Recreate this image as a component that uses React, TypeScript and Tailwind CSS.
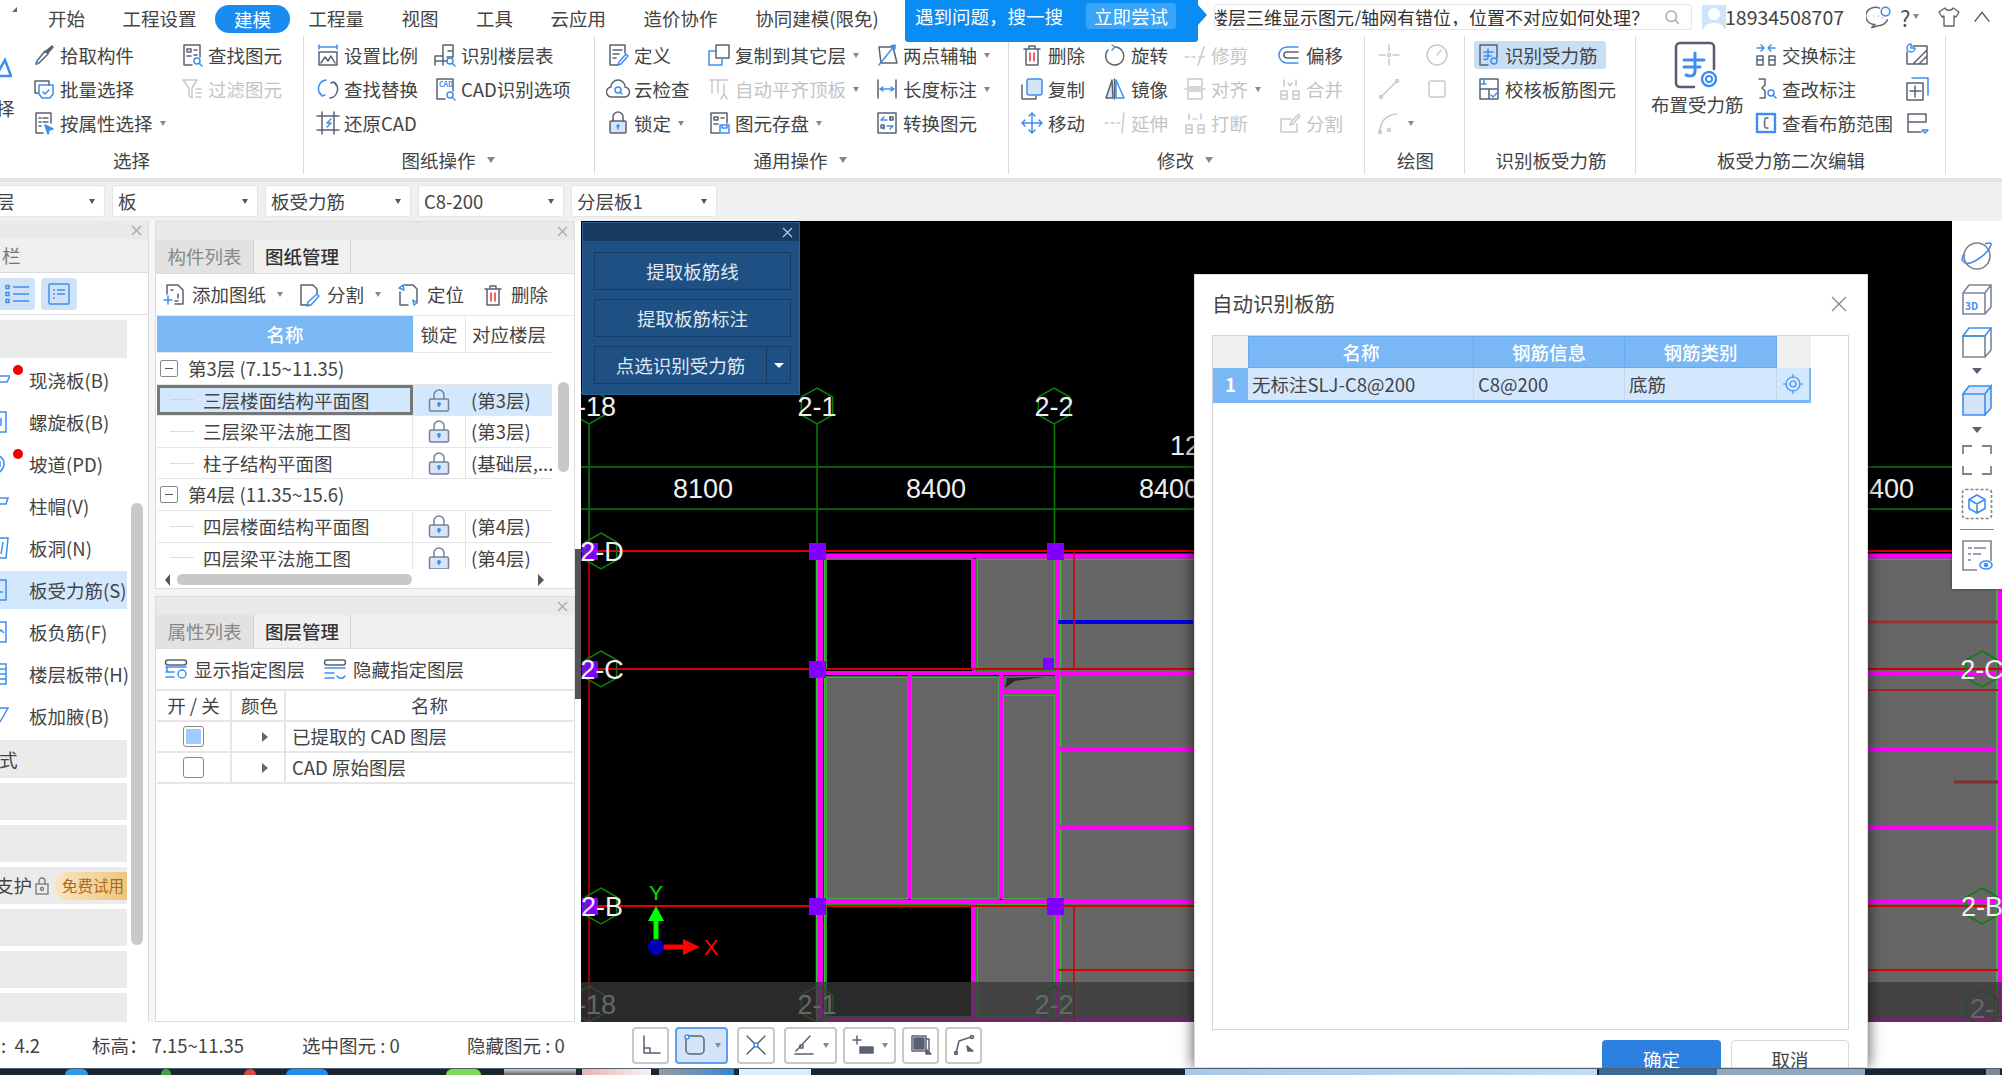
import React from 'react';

const BLUE = '#3d8ef0';

// every ribbon icon is a 24x24 drawing, currentColor is the grey (or the disabled grey)
const Ic = ({ children, size = 24 }: { children: React.ReactNode; size?: number }) => (
  <svg width={size} height={size} viewBox="0 0 24 24" fill="none" stroke="currentColor" strokeWidth="1.5" strokeLinecap="round" strokeLinejoin="round" className="shrink-0">
    {children}
  </svg>
);

const B = ({ d }: { d: string }) => <path d={d} stroke={BLUE} />;
const G = ({ d }: { d: string }) => <path d={d} />;

const icons: Record<string, React.ReactNode> = {
  pick: <><path d="M20 3l1 1-5 6-2-2z" fill="#5a6272" /><G d="M13 8l3 3-9 9-3 1 1-3z" /><B d="M5 18l-1 3 3-1" /></>,
  batch: <><G d="M3 4h14v4M3 4v12h3" /><B d="M7 8h14v9l-3 4H10l-3-4z" /><B d="M11 15l2 2 4-4" /></>,
  attr: <><G d="M4 2h15v10M4 2v20h7M7 7h2M11 7h5M7 11h2M11 11h5M7 15h2" /><path d="M13 14l8 4-4 1-1 4z" fill={BLUE} stroke={BLUE} /></>,
  find: <><G d="M4 2h16v12M4 2v20h8M7 6h4v3H7zM14 7h3M7 13h4M14 12h3" /><circle cx="17" cy="18" r="3" stroke={BLUE} /><B d="M19 20l3 3" /></>,
  filter: <><G d="M3 3h14l-5 8v10l-3-2v-8zM16 12h5M16 16h5M16 20h5" /></>,
  scale: <><B d="M3 2v4M21 2v4M4 4h16" /><G d="M3 9h18v13H3zM5 20l4-6 3 4 3-5 4 7" /></>,
  floors: <><G d="M2 22v-9h8v9M2 18h12M10 2h10v12h-6M10 2v11M15 8h5" /><circle cx="17" cy="18" r="3" stroke={BLUE} /><B d="M19 20l3 3" /></>,
  replace: <><B d="M10 3a9 9 0 00-4 16M4 16l2 3 3-1" /><G d="M14 21a9 9 0 004-16M20 8l-2-3-3 1" /></>,
  cadopt: <><G d="M4 2h16v12M4 2v20h8" /><text x="6" y="10" fontSize="7" fontWeight="700" fill={BLUE} stroke="none">CAD</text><circle cx="17" cy="18" r="3" stroke={BLUE} /><B d="M19 20l3 3" /></>,
  restore: <><G d="M6 1v22M18 1v22M1 5h22M1 19h22" /><B d="M15 8l-4 4h4l-4 4" /></>,
  define: <><G d="M4 2h15v8M4 2v20h8M7 7h9M7 11h6M7 15h3" /><B d="M20 11l2 2-7 8-3 1 1-3z" /></>,
  cloud: <><G d="M6 20a5 5 0 01-1-10 7 7 0 0114 0 5 5 0 01-1 10z" /><circle cx="12" cy="13" r="3" stroke={BLUE} /><B d="M14 15l2 2" /></>,
  lock: <><rect x="4" y="10" width="16" height="12" rx="1" fill="#d5e4f7" /><G d="M7 10V6a5 5 0 0110 0v4" /><circle cx="12" cy="15" r="1" fill={BLUE} stroke={BLUE} /><B d="M12 15v3" /></>,
  copylayer: <><G d="M9 2h13v13H9z" /><B d="M2 8h7M2 8v14h13v-6" /></>,
  auto: <><G d="M3 3h18M5 3v13M11 3v13M17 7v10M14 22l3-5 3 5" /></>,
  save: <><G d="M4 2h16v10M4 2v20h8M7 6h4v3H7zM14 7h3M7 13h4" /><B d="M13 14h9v8h-9zM15 14v3h5v-3" /></>,
  axis: <><G d="M4 4h14M6 20h16M4 4l2 16M18 4l4 16" /><B d="M4 22L20 2M20 2l-4 1M20 2v4" /></>,
  length: <><G d="M3 3v18M21 3v18" /><B d="M5 12h14M5 12l3-2M5 12l3 2M19 12l-3-2M19 12l-3 2" /></>,
  convert: <><G d="M3 2h18v20H3z" /><B d="M9 6L6 9h6M15 18l3-3h-6M15 6v3M9 18v-3" /><G d="M6 14h3v3H6zM15 6h3v3h-3z" /></>,
  del: <><G d="M4 6h16M9 6V3h6v3M6 6v16h12V6" /><path d="M10 10v8M14 10v8" stroke="#e33" /></>,
  rotate: <><G d="M12 4a9 9 0 11-7 3" /><B d="M9 2l3 2-3 3" /></>,
  trim: <><G d="M2 14h4M9 14h3M15 22L21 4M16 14h5" /></>,
  offset: <><B d="M20 4H9a8 8 0 000 16h11" /><G d="M20 9H9a3 3 0 000 6h11" /></>,
  copy: <><G d="M2 8v14h14v-3" /><rect x="7" y="2" width="15" height="16" rx="2" fill="#d5e4f7" stroke={BLUE} /></>,
  mirror: <><path d="M9 3L3 21h7z" fill="#d5e4f7" stroke="#5a6272" /><B d="M13 3l8 18h-8z" /><G d="M11.5 2v20" /></>,
  alignd: <><G d="M5 2h14v8H5zM5 14h14v8H5zM2 12h20" /></>,
  merge: <><G d="M3 14h6v8H3zM15 14h6v8h-6zM3 18h6M15 18h6M6 3v6M18 3v6M10 6l2 3 2-3" /></>,
  move: <><B d="M12 2v20M2 12h20M12 2L9 5M12 2l3 3M12 22l-3-3M12 22l3-3M2 12l3-3M2 12l3 3M22 12l-3-3M22 12l-3 3" /></>,
  extend: <><G d="M2 12h3M8 12h3M14 12h3M21 2l-2 20" /></>,
  breakd: <><G d="M3 14h6v8H3zM15 14h6v8h-6zM3 18h6M15 18h6M6 8V3M18 8V3M10 8h1M13 8h1" /></>,
  split: <><G d="M3 8h10M3 8v13h16v-8M21 3l-8 8-1 3 3-1 7-8" /></>,
  pt: <><G d="M12 2v6M12 16v6M2 12h6M16 12h6" /><circle cx="12" cy="12" r="1.5" /></>,
  circ: <><circle cx="12" cy="12" r="10" /><G d="M12 12l4-5" /></>,
  line: <><G d="M4 20L20 4" /><circle cx="4" cy="20" r="1.5" /><circle cx="20" cy="4" r="1.5" /></>,
  rect: <><rect x="4" y="4" width="16" height="16" rx="2" /></>,
  arc: <><G d="M3 22C3 10 9 4 20 3" /><circle cx="3" cy="21" r="1.5" /><circle cx="12" cy="19" r="1.5" /></>,
  recog: <><G d="M3 2h17v13M3 2v20h8" /><B d="M7 9h9M11 6v8c0 3-2 3-4 2M7 13h7" /><circle cx="17" cy="18" r="3" stroke={BLUE} /></>,
  check: <><G d="M3 2h18v20H3zM3 12h18M12 12v10" /><B d="M7 2v5M3 7h6M14 18l2 2 5-5" /></>,
  swap: <><G d="M3 13h6v9H3zM15 13h6v9h-6zM3 17h6M15 17h6" /><B d="M3 5h7M7 2l3 3-3 3M21 5h-7M17 2l-3 3 3 3" /></>,
  edit: <><G d="M5 2h6v6l-3 3 3 3v7H6" /><circle cx="17" cy="16" r="3" stroke={BLUE} /><B d="M19 18l3 3" /></>,
  range: <><path d="M3 3h18v18H3z" stroke={BLUE} strokeDasharray="2 1.5" strokeWidth="2.5" /><G d="M14 7h-2c-2 0-2 10 0 10h2" /></>,
  hatch: <><G d="M8 3h14v18H2V9M8 21L22 7M14 21l8-8" /><B d="M6 1a4 4 0 104 4H6z" /></>,
  adddoc: <><B d="M7 1h16v17" /><G d="M2 6h16v17H2zM10 9v11M5 14h11" /></>,
  tabled: <><G d="M3 3h18v8H3M3 3v18h13M3 11h18" /><B d="M17 19h6l-3 3z" /></>,
};

type Item = { icon: string; label: string; off?: boolean; caret?: boolean; on?: boolean };

const Caret = ({ className = 'ml-[7px]' }: { className?: string }) => (
  <span className={`${className} w-0 h-0 border-x-[3.5px] border-x-transparent border-t-[5px] border-t-[#888]`} />
);

const RibbonRow = ({ item }: { item: Item }) => (
  <div className={`flex items-center h-[34px] whitespace-nowrap ${item.off ? 'text-[#c9c9c9]' : 'text-[#5a6272]'}`}>
    <Ic>{icons[item.icon]}</Ic>
    {item.label && <span className={`ml-[4px] ${item.off ? 'text-[#c4c4c4]' : 'text-[#444]'}`}>{item.label}</span>}
    {item.caret && <Caret />}
  </div>
);

const Col = ({ items, className }: { items: Item[]; className: string }) => (
  <div className={`flex flex-col shrink-0 ${className}`}>
    {items.map((it) => (
      <RibbonRow key={it.icon + it.label} item={it} />
    ))}
  </div>
);

const Group = ({ className, label, caret, labelClass = '', children }: { className: string; label: string; caret?: boolean; labelClass?: string; children: React.ReactNode }) => (
  <div className={`flex flex-col shrink-0 h-[138px] border-r border-[#dcdcdc] ${className}`}>
    <div className="flex h-[102px] mt-[2px]">{children}</div>
    <div className={`flex items-center justify-center h-[24px] mt-[8px] text-[#444] ${labelClass}`}>
      {label}
      {caret && <span className="ml-[11px] w-0 h-0 border-x-[4.5px] border-x-transparent border-t-[6px] border-t-[#888]" />}
    </div>
  </div>
);

const Ribbon = () => (
  <div className="flex h-[149px] pt-[3px] bg-white border-b-4 border-[#e4e4e4] shrink-0">
    <Group className="w-[304px]" label="选择" labelClass="pr-[40px]">
      <div className="w-[32px] shrink-0 relative text-[#444]">
        <svg width="12" height="24" viewBox="0 0 12 24" className="mt-[18px]"><path d="M-4 20L5 4l6 16z" fill="none" stroke={BLUE} strokeWidth="2.5" /></svg>
        <span className="absolute left-[-4px] top-[61px]">择</span>
      </div>
      <Col className="w-[148px]" items={[{ icon: 'pick', label: '拾取构件' }, { icon: 'batch', label: '批量选择' }, { icon: 'attr', label: '按属性选择', caret: true }]} />
      <Col className="w-[120px]" items={[{ icon: 'find', label: '查找图元' }, { icon: 'filter', label: '过滤图元', off: true }]} />
    </Group>
    <Group className="w-[291px] pl-[12px]" label="图纸操作" caret labelClass="pr-[14px]">
      <Col className="w-[117px]" items={[{ icon: 'scale', label: '设置比例' }, { icon: 'replace', label: '查找替换' }, { icon: 'restore', label: '还原CAD' }]} />
      <Col className="w-[140px]" items={[{ icon: 'floors', label: '识别楼层表' }, { icon: 'cadopt', label: 'CAD识别选项' }]} />
    </Group>
    <Group className="w-[414px] pl-[11px]" label="通用操作" caret labelClass="pr-[14px]">
      <Col className="w-[101px]" items={[{ icon: 'define', label: '定义' }, { icon: 'cloud', label: '云检查' }, { icon: 'lock', label: '锁定', caret: true }]} />
      <Col className="w-[168px]" items={[{ icon: 'copylayer', label: '复制到其它层', caret: true }, { icon: 'auto', label: '自动平齐顶板', off: true, caret: true }, { icon: 'save', label: '图元存盘', caret: true }]} />
      <Col className="w-[125px]" items={[{ icon: 'axis', label: '两点辅轴', caret: true }, { icon: 'length', label: '长度标注', caret: true }, { icon: 'convert', label: '转换图元' }]} />
    </Group>
    <Group className="w-[356px] pl-[11px]" label="修改" caret labelClass="pr-[14px]">
      <Col className="w-[83px]" items={[{ icon: 'del', label: '删除' }, { icon: 'copy', label: '复制' }, { icon: 'move', label: '移动' }]} />
      <Col className="w-[80px]" items={[{ icon: 'rotate', label: '旋转' }, { icon: 'mirror', label: '镜像' }, { icon: 'extend', label: '延伸', off: true }]} />
      <Col className="w-[95px]" items={[{ icon: 'trim', label: '修剪', off: true }, { icon: 'alignd', label: '对齐', off: true, caret: true }, { icon: 'breakd', label: '打断', off: true }]} />
      <Col className="w-[80px]" items={[{ icon: 'offset', label: '偏移' }, { icon: 'merge', label: '合并', off: true }, { icon: 'split', label: '分割', off: true }]} />
    </Group>
    <Group className="w-[100px] pl-[12px]" label="绘图" labelClass="pr-[10px]">
      <Col className="w-[48px]" items={[{ icon: 'pt', label: '', off: true }, { icon: 'line', label: '', off: true }, { icon: 'arc', label: '', off: true, caret: true }]} />
      <Col className="w-[30px]" items={[{ icon: 'circ', label: '', off: true }, { icon: 'rect', label: '', off: true }]} />
    </Group>
    <Group className="w-[171px] pl-[9px]" label="识别板受力筋" labelClass="pr-[7px]">
      <div className="flex flex-col shrink-0">
        <div className="flex items-center h-[28px] my-[3px] w-[132px] pl-[3px] rounded-[3px] bg-[#c8def5] text-[#5a6272]">
          <Ic>{icons.recog}</Ic>
          <span className="ml-[4px] text-[#444]">识别受力筋</span>
        </div>
        <div className="pl-[3px]">
          <RibbonRow item={{ icon: 'check', label: '校核板筋图元' }} />
        </div>
      </div>
    </Group>
    <Group className="w-[310px] pl-[15px]" label="板受力筋二次编辑" labelClass="pr-[14px]">
      <div className="w-[103px] shrink-0 flex flex-col items-start text-[#5a6272]">
        <div className="ml-[21px] mt-[3px]">
          <svg width="50" height="50" viewBox="0 0 50 50" fill="none" strokeLinecap="round" strokeLinejoin="round">
            <path d="M8 2h30a4 4 0 014 4v22M22 46H8a4 4 0 01-4-4V6a4 4 0 014-4" stroke="#555e6e" strokeWidth="2.5" />
            <path d="M12 19h20M23 12v18c0 5-4 6-9 4M12 26h16" stroke={BLUE} strokeWidth="3" />
            <circle cx="37" cy="38" r="7" stroke={BLUE} strokeWidth="2.5" strokeDasharray="4 1.5" />
            <circle cx="37" cy="38" r="3" stroke={BLUE} strokeWidth="2" />
          </svg>
        </div>
        <span className="text-[#444] mt-[4px] whitespace-nowrap">布置受力筋</span>
      </div>
      <Col className="w-[151px]" items={[{ icon: 'swap', label: '交换标注' }, { icon: 'edit', label: '查改标注' }, { icon: 'range', label: '查看布筋范围' }]} />
      <Col className="w-[30px]" items={[{ icon: 'hatch', label: '' }, { icon: 'adddoc', label: '' }, { icon: 'tabled', label: '' }]} />
    </Group>
  </div>
);

const tabs = ['开始', '工程设置', '建模', '工程量', '视图', '工具', '云应用', '造价协作', '协同建模(限免)'];

const TopBar = () => (
  <div className="flex h-[33px] bg-white shrink-0 items-center text-[#444]">
    <div className="flex-1 flex items-center gap-[37.5px] pl-[48px] relative">
      <span className="absolute left-[12px] top-[7px] w-0 h-0 border-l-[5px] border-l-transparent border-b-[5px] border-b-[#666]" />
      {tabs.map((t) =>
        t === '建模' ? (
          <span key={t} className="-mx-[19px] px-[19px] h-[28px] mt-[5px] flex items-center rounded-full bg-[#1a8cf0] text-white">{t}</span>
        ) : (
          <span key={t} className="whitespace-nowrap pt-[4px]">{t}</span>
        )
      )}
    </div>
    <div className="w-[788px] flex items-center shrink-0">
      <div className="w-[478px] h-[26px] ml-0 flex items-center border border-[#e6e6e6] rounded-[3px]">
        <div className="w-[434px] flex justify-end overflow-hidden whitespace-nowrap text-[#333] text-[18px]">楼层三维显示图元/轴网有错位，位置不对应如何处理？</div>
        <svg width="18" height="18" viewBox="0 0 24 24" fill="none" stroke="#aaa" strokeWidth="2" className="ml-[14px]"><circle cx="11" cy="11" r="7" /><path d="M16 16l5 5" /></svg>
      </div>
      <div className="w-[24px] h-[24px] ml-[10px] bg-[#cfe4fb] flex items-end justify-center overflow-hidden">
        <svg width="24" height="24" viewBox="0 0 24 24"><circle cx="12" cy="9" r="6" fill="#fff" /><path d="M2 24c1-8 19-8 20 0z" fill="#fff" /></svg>
      </div>
      <span className="w-[118px] text-[19.5px] -ml-[1px]">18934508707</span>
      <svg width="26" height="26" viewBox="0 0 24 24" fill="none" stroke="#666" strokeWidth="1.4" className="ml-[23px]"><path d="M13 4a9 8 0 10-5 15l-3 3 6-2a9 8 0 009-6" /><circle cx="18" cy="7" r="4" stroke={BLUE} /><path d="M7 11h.5M11 11h.5M15 13h.5" /></svg>
      <span className="ml-[8px] text-[22px] leading-none text-[#555]">?</span>
      <span className="ml-[3px]"><Caret className="block" /></span>
      <svg width="24" height="26" viewBox="0 0 24 24" fill="none" stroke="#666" strokeWidth="1.4" strokeLinejoin="round" className="ml-[18px]"><path d="M8 3L2 7l3 5 2-1v10h10V11l2 1 3-5-6-4c-1 3-7 3-8 0z" /></svg>
      <svg width="22" height="22" viewBox="0 0 24 24" fill="none" stroke="#555" strokeWidth="1.5" className="ml-[10px]"><path d="M4 17l8-10 8 10" /></svg>
    </div>
  </div>
);

const Bubble = () => (
  <div className="absolute left-[905px] top-0 w-[293px] h-[42px] bg-[#0a8cf5] rounded-b-[3px] flex items-start pt-[3px] pl-[10px] text-white z-20">
    <span className="whitespace-nowrap leading-[26px]">遇到问题，搜一搜</span>
    <span className="absolute left-[181px] top-[3px] w-[90px] h-[26px] rounded-[3px] bg-[#3aa5f8] flex items-center justify-center">立即尝试</span>
    <span className="absolute left-[293px] top-[5px] w-0 h-0 border-y-[10px] border-y-transparent border-l-[9px] border-l-[#0a8cf5]" />
  </div>
);

const selects = [
  { t: '层', c: '-ml-[41px] pl-[36px]' },
  { t: '板', c: 'ml-[7px] pl-[5px]' },
  { t: '板受力筋', c: 'ml-[7px] pl-[5px]' },
  { t: 'C8-200', c: 'ml-[7px] pl-[5px]' },
  { t: '分层板1', c: 'ml-[7px] pl-[5px]' },
];

const SelectBar = () => (
  <div className="flex items-start h-[39px] pt-[3px] bg-[#f0f0f0] shrink-0">
    {selects.map((s) => (
      <div key={s.t} className={`${s.c} w-[146px] h-[32px] pr-[9px] flex items-center justify-between bg-white border border-[#e4e4e4] rounded-[3px] text-[#444] shrink-0`}>
        <span>{s.t}</span>
        <span className="w-0 h-0 border-x-[3.5px] border-x-transparent border-t-[5px] border-t-[#555]" />
      </div>
    ))}
  </div>
);

const Close = ({ className = 'text-[#aaa]' }: { className?: string }) => (
  <svg width="11" height="11" viewBox="0 0 11 11" stroke="currentColor" strokeWidth="1.4" className={className}><path d="M1 1l9 9M10 1l-9 9" /></svg>
);

const Strip = () => (
  <div className="h-[18px] flex items-center justify-end pr-[6px] bg-[#e9e9e9] shrink-0"><Close /></div>
);

const navItems = [
  { label: '现浇板(B)', dot: true, d: 'M-8 8h18l-3 6H-8z' },
  { label: '螺旋板(B)', d: 'M-8 2H6v20H-8M1 8v8' },
  { label: '坡道(PD)', dot: true, d: 'M-8 2C8 2 8 22-8 22M0 9v6' },
  { label: '柱帽(V)', d: 'M-8 4H8L6 10H-2v12' },
  { label: '板洞(N)', d: 'M-8 2H8L6 22H-8M3 6L1 18' },
  { label: '板受力筋(S)', active: true, d: 'M-8 2H6v20H-8M0 14h3' },
  { label: '板负筋(F)', d: 'M-8 2H6v20H-8M-2 13l3-3 3 3' },
  { label: '楼层板带(H)', d: 'M-8 2H6v20H-8M0 7h6M0 12h6M0 17h6' },
  { label: '板加腋(B)', d: 'M-8 4H8L0 18' },
];

const LeftPanel = () => (
  <div className="w-[149px] shrink-0 flex flex-col bg-white border-r border-[#dcdcdc] relative overflow-hidden">
    <Strip />
    <div className="h-[34px] flex items-center bg-[#f0f0f0] border-b border-[#dcdcdc] text-[#777] shrink-0"><span className="ml-[2px]">栏</span></div>
    <div className="h-[42px] flex items-center border-b border-[#e0e0e0] shrink-0">
      <div className="-ml-[2px] w-[37px] h-[32px] rounded-[4px] bg-[#cfe2f7] flex items-center justify-center">
        <svg width="26" height="22" viewBox="0 0 26 22" fill="none" stroke={BLUE} strokeWidth="1.5"><path d="M9 4h16M9 11h16M9 18h16" /><rect x="2" y="2.5" width="3" height="3" /><rect x="2" y="9.5" width="3" height="3" /><rect x="2" y="16.5" width="3" height="3" /></svg>
      </div>
      <div className="ml-[6px] w-[36px] h-[32px] rounded-[4px] bg-[#cfe2f7] flex items-center justify-center">
        <svg width="24" height="24" viewBox="0 0 24 24" fill="none" stroke={BLUE} strokeWidth="1.5"><rect x="2" y="2" width="20" height="20" rx="1" /><path d="M6 8h2M10 8h8M6 12h2M10 12h8M6 16h2" /></svg>
      </div>
    </div>
    <div className="flex flex-col w-[127px] pt-[5px] text-[#444]">
      <div className="h-[38px] mb-[1px] bg-[#ebebeb]" />
      {navItems.map((n) => (
        <div key={n.label} className={`relative h-[38px] my-[2px] flex items-center pl-[29px] whitespace-nowrap ${n.active ? 'bg-[#d4e8fd]' : ''}`}>
          <svg width="10" height="24" viewBox="0 0 10 24" fill="none" stroke={BLUE} strokeWidth="1.5" className="absolute left-0 top-[7px]"><path d={n.d} /></svg>
          {n.dot && <span className="absolute left-[13px] top-[4px] w-[10px] h-[10px] rounded-full bg-[#f00000]" />}
          {n.label}
        </div>
      ))}
      <div className="h-[38px] mt-[3px] bg-[#ebebeb] flex items-center"><span className="-ml-[1px]">式</span></div>
      <div className="h-[37px] mt-[5px] bg-[#ebebeb]" />
      <div className="h-[37px] mt-[5px] bg-[#ebebeb]" />
      <div className="h-[37px] mt-[5px] bg-[#ebebeb] flex items-center whitespace-nowrap overflow-hidden">
        <span className="-ml-[5px]">支护</span>
        <svg width="14" height="18" viewBox="0 0 14 18" fill="none" stroke="#777" strokeWidth="1.3" className="ml-[3px] shrink-0"><rect x="1" y="7" width="12" height="10" /><path d="M4 7V4a3 3 0 016 0v3" /><circle cx="7" cy="12" r="1.5" /></svg>
        <span className="ml-[5px] w-[80px] shrink-0 h-[28px] pl-[8px] flex items-center rounded-l-full bg-gradient-to-r from-[#fbe5c4] to-[#eec272] text-[#a5681c] text-[15.5px]">免费试用</span>
      </div>
      <div className="h-[37px] mt-[5px] bg-[#ebebeb]" />
      <div className="h-[37px] mt-[5px] bg-[#ebebeb]" />
      <div className="h-[37px] mt-[5px] bg-[#ebebeb]" />
    </div>
    <div className="absolute left-[131px] top-[282px] w-[12px] h-[442px] rounded-full bg-[#c8c8c8]" />
  </div>
);

const TabStrip = ({ a, b }: { a: string; b: string }) => (
  <div className="flex h-[34px] bg-[#f0f0f0] border-b border-[#dcdcdc] shrink-0">
    <div className="w-[98px] flex items-center justify-center bg-[#e2e2e2] text-[#888] border-r border-[#d0d0d0]">{a}</div>
    <div className="w-[97px] flex items-center justify-center bg-[#f0f0f0] text-[#333] font-medium border-r border-[#d0d0d0]">{b}</div>
  </div>
);

const LockIcon = () => (
  <svg width="22" height="24" viewBox="0 0 22 24" fill="none" stroke="#74809a" strokeWidth="1.5">
    <path d="M6 11V7a5 5 0 0110 0v4" />
    <rect x="1.5" y="11" width="19" height="12" rx="1.5" fill="#d5e4f7" />
    <circle cx="11" cy="16" r="1.2" fill={BLUE} stroke={BLUE} />
    <path d="M11 16v3" stroke={BLUE} />
  </svg>
);

const drawingRows = [
  { group: '第3层 (7.15~11.35)' },
  { name: '三层楼面结构平面图', floor: '(第3层)', sel: true },
  { name: '三层梁平法施工图', floor: '(第3层)' },
  { name: '柱子结构平面图', floor: '(基础层,...' },
  { group: '第4层 (11.35~15.6)' },
  { name: '四层楼面结构平面图', floor: '(第4层)' },
  { name: '四层梁平法施工图', floor: '(第4层)' },
];

const DrawingPanel = () => (
  <div className="h-[368px] flex flex-col bg-white border border-[#dcdcdc] shrink-0 relative overflow-hidden">
    <Strip />
    <TabStrip a="构件列表" b="图纸管理" />
    <div className="flex items-center h-[42px] pl-[6px] text-[#444] border-b border-[#e6e6e6] shrink-0 whitespace-nowrap">
      <span className="text-[#5a6272]"><Ic size={24}><G d="M5 2h11l5 5v14h-8M5 2v9M9 7h2M16 11v4M16 18h-3" /><B d="M2 17h8M6 13v8" /></Ic></span>
      <span className="ml-[6px]">添加图纸</span>
      <Caret className="ml-[11px]" />
      <span className="ml-[14px] text-[#5a6272]"><Ic size={24}><G d="M4 2h12l4 4v5M4 2v20h8" /><B d="M20 11l2 2-8 9-4 1 1-4z" /></Ic></span>
      <span className="ml-[6px]">分割</span>
      <Caret className="ml-[11px]" />
      <span className="ml-[15px] text-[#5a6272]"><Ic size={24}><G d="M8 2h9l4 4v13M4 9v13h8" /><B d="M3 5l4-3 1 5zM17 17l4 3-3 2z" /></Ic></span>
      <span className="ml-[7px]">定位</span>
      <span className="ml-[17px] text-[#5a6272]"><Ic size={24}>{icons.del}</Ic></span>
      <span className="ml-[6px]">删除</span>
    </div>
    <div className="w-[395px] ml-px flex h-[37px] text-[#444] border-b border-[#e6e6e6] shrink-0">
      <div className="w-[256px] flex items-center justify-center bg-[#7ab8f5] text-white font-medium">名称</div>
      <div className="w-[53px] flex items-center justify-center border-r border-[#e6e6e6]">锁定</div>
      <div className="w-[86px] flex items-center justify-center">对应楼层</div>
    </div>
    <div className="w-[395px] ml-px h-[216px] overflow-hidden text-[#444] shrink-0 relative">
      {drawingRows.map((r) =>
        r.group ? (
          <div key={r.group} className="h-[31.6px] flex items-center pl-[3px] border-b border-[#e6e6e6] whitespace-nowrap">
            <span className="w-[18px] h-[17px] border border-[#888] rounded-[2px] flex items-center justify-center"><span className="w-[8px] h-px bg-[#555]" /></span>
            <span className="ml-[10px]">{r.group}</span>
          </div>
        ) : (
          <div key={r.name} className={`h-[31.6px] flex border-b border-[#e6e6e6] whitespace-nowrap ${r.sel ? 'bg-[#d4e8fd]' : ''}`}>
            <div className={r.sel ? 'w-[256px] flex items-center border-[3px] border-[#777]' : 'w-[256px] flex items-center border-r border-[#e6e6e6]'}>
              <span className={r.sel ? 'ml-[10px] w-[24px] h-px bg-[#c5d5e5]' : 'ml-[13px] w-[24px] h-px bg-[#dcdcdc]'} />
              <span className="ml-[9px]">{r.name}</span>
            </div>
            <div className="w-[53px] flex items-center justify-center border-r border-[#e6e6e6]"><LockIcon /></div>
            <div className="w-[86px] pl-[5px] flex items-center overflow-hidden">{r.floor}</div>
          </div>
        )
      )}
    </div>
    <div className="absolute left-[402px] top-[160px] w-[11px] h-[90px] rounded-full bg-[#c8c8c8]" />
    <div className="flex items-center h-[21px] pl-[9px] shrink-0">
      <span className="w-0 h-0 border-y-[6px] border-y-transparent border-r-[5px] border-r-[#555]" />
      <span className="ml-[7px] w-[235px] h-[11px] rounded-full bg-[#c8c8c8]" />
      <span className="ml-[126px] w-0 h-0 border-y-[6px] border-y-transparent border-l-[6px] border-l-[#555]" />
    </div>
  </div>
);

const layerRows = [
  { name: '已提取的 CAD 图层', on: true },
  { name: 'CAD 原始图层', on: false },
];

const LayerPanel = () => (
  <div className="h-[426px] flex flex-col bg-white border border-[#dcdcdc] shrink-0 overflow-hidden">
    <Strip />
    <TabStrip a="属性列表" b="图层管理" />
    <div className="flex items-center h-[42px] pl-[8px] text-[#444] border-b-2 border-[#e6e6e6] shrink-0 whitespace-nowrap">
      <span className="text-[#5a6272]"><Ic size={24}><G d="M4 3h16a2 2 0 010 5H4a2 2 0 010-5z" /><B d="M2 10h20M2 15h8M2 20h8M4 10a3 3 0 000 5" /><circle cx="18" cy="17" r="4" stroke={BLUE} /></Ic></span>
      <span className="ml-[6px]">显示指定图层</span>
      <span className="ml-[18px] text-[#5a6272]"><Ic size={24}><G d="M4 3h16a2 2 0 010 5H4a2 2 0 010-5z" /><B d="M2 11h20M2 16h9M2 21h9M14 19c2 3 6 3 8 0" /></Ic></span>
      <span className="ml-[6px]">隐藏指定图层</span>
    </div>
    <div className="flex h-[31px] text-[#444] border-b-2 border-[#e6e6e6] shrink-0 mx-px">
      <div className="w-[75px] flex items-center justify-center border-r-2 border-[#e6e6e6] whitespace-pre">开 / 关</div>
      <div className="w-[54px] flex items-center justify-center border-r-2 border-[#e6e6e6] pl-[3px]">颜色</div>
      <div className="flex-1 flex items-center justify-center">名称</div>
    </div>
    {layerRows.map((r) => (
      <div key={r.name} className="flex h-[31px] text-[#444] border-b-2 border-[#e6e6e6] shrink-0 mx-px">
        <div className="w-[75px] flex items-center justify-center border-r-2 border-[#e6e6e6]">
          <span className="w-[21px] h-[21px] rounded-[3px] border border-[#888] p-[2px] bg-white"><span className={`block w-full h-full ${r.on ? 'bg-[#a0ccff]' : ''}`} /></span>
        </div>
        <div className="w-[54px] flex items-center justify-end pr-[16px] border-r-2 border-[#e6e6e6]">
          <span className="w-0 h-0 border-y-[5px] border-y-transparent border-l-[6px] border-l-[#666]" />
        </div>
        <div className="flex-1 flex items-center pl-[6px] whitespace-pre">{r.name}</div>
      </div>
    ))}
  </div>
);

const Hex = ({ x, y, r = 18 }: { x: number; y: number; r?: number }) => {
  const w = r * 0.87;
  return <polygon points={`${x},${y - r} ${x + w},${y - r / 2} ${x + w},${y + r / 2} ${x},${y + r} ${x - w},${y + r / 2} ${x - w},${y - r / 2}`} fill="none" stroke="#0b7d0b" strokeWidth="1.5" />;
};

const Lbl = ({ x, y, t, s = 27 }: { x: number; y: number; t: string; s?: number }) => (
  <text x={x} y={y + s * 0.36} textAnchor="middle" fontSize={s} fontFamily="Liberation Sans, sans-serif" fill="#efefef">{t}</text>
);

const Room = ({ x, y, w, h, fill = '#666666' }: { x: number; y: number; w: number; h: number; fill?: string }) => (
  <rect x={x} y={y} width={w} height={h} fill={fill} stroke="#33c233" strokeWidth="1.5" />
);

const H = ({ y, x1, x2, c = '#ff00ff', w = 4 }: { y: number; x1: number; x2: number; c?: string; w?: number }) => <path d={`M${x1} ${y}H${x2}`} stroke={c} strokeWidth={w} />;
const V = ({ x, y1, y2, c = '#ff00ff', w = 4 }: { x: number; y1: number; y2: number; c?: string; w?: number }) => <path d={`M${x} ${y1}V${y2}`} stroke={c} strokeWidth={w} />;
const Sq = ({ x, y, w = 17, h = 17 }: { x: number; y: number; w?: number; h?: number }) => <rect x={x} y={y} width={w} height={h} fill="#8000ff" />;

// the CAD drawing, in page coordinates
const Drawing = () => (
  <svg viewBox="581 221 1421 801" className="absolute inset-0 w-full h-full">
    <rect x="581" y="221" width="1421" height="801" fill="#000" />
    {/* dimension lines */}
    <path d="M581 467H1960M581 509H1960M589 424V551M817 424V551M1054.5 424V551" stroke="#0b7d0b" strokeWidth="1.5" fill="none" />
    {/* slabs */}
    <Room x={977} y={559} w={78} h={111} />
    <Room x={1060.5} y={559} w={937} h={463} />
    <Room x={826} y={677} w={82} h={222} />
    <Room x={911} y={677} w={88} h={222} />
    <Room x={1003} y={695} w={52} h={204} />
    <rect x="1003" y="676" width="52" height="15" fill="#666666" />
    <path d="M1005 688l2-10 38-1-30 4z" fill="#2a2a2a" />
    <Room x={977} y={904} w={78} h={113} />
    <Room x={826} y={904} w={146} h={113} fill="#000" />
    <Room x={826} y={559} w={146} h={110} fill="#000" />
    {/* walls */}
    <H y={556} x1={817} x2={1998} w={5} />
    <H y={673} x1={817} x2={1998} />
    <H y={902} x1={817} x2={1998} />
    <H y={749} x1={1060} x2={2002} />
    <H y={827} x1={1060} x2={2002} />
    <H y={1020} x1={817} x2={2002} />
    <H y={692} x1={1001} x2={1057} />
    <V x={820} y1={553} y2={1022} w={6} />
    <V x={816.5} y1={553} y2={1022} c="#33c233" w={1.5} />
    <V x={824.5} y1={559} y2={1022} c="#33c233" w={1.5} />
    <V x={974} y1={559} y2={671} />
    <V x={974} y1={903} y2={1022} />
    <V x={909.5} y1={675} y2={899} />
    <V x={1001} y1={675} y2={899} />
    <V x={1057.5} y1={553} y2={1022} w={5} />
    <path d="M2000 557V1022" stroke="#ff00ff" strokeWidth="5" />
    <path d="M1997 557V1022" stroke="#33c233" strokeWidth="1.5" />
    {/* rebar and axis */}
    <H y={622} x1={1058} x2={1193} c="#0000e6" />
    <H y={551} x1={581} x2={2002} c="#e00000" w={2} />
    <H y={669} x1={581} x2={2002} c="#d00000" w={2} />
    <H y={906} x1={581} x2={1998} c="#e00000" w={2} />
    <H y={970} x1={1058} x2={1998} c="#e00000" w={2} />
    <H y={622} x1={1868} x2={1998} c="#a33030" w={3} />
    <H y={690} x1={1868} x2={1998} c="#b02020" w={2} />
    <H y={782} x1={1954} x2={1998} c="#803030" w={3} />
    <V x={589} y1={551} y2={1022} c="#d00000" w={1.5} />
    <V x={1074} y1={551} y2={669} c="#d00000" w={1.5} />
    <V x={1074} y1={906} y2={1022} c="#d00000" w={1.5} />
    {/* handles */}
    <Sq x={809} y={543} />
    <Sq x={1047} y={543} />
    <Sq x={809} y={661} />
    <Sq x={1043} y={658} w={11} h={12} />
    <Sq x={809} y={898} />
    <Sq x={1047} y={898} />
    <Sq x={582} y={543} w={16} />
    <Sq x={582} y={661} w={16} />
    <Sq x={582} y={898} w={16} />
    {/* axis labels */}
    <Hex x={589} y={406} /><Lbl x={589} y={406} t="2-18" />
    <Hex x={817} y={406} /><Lbl x={817} y={406} t="2-1" />
    <Hex x={1054} y={406} /><Lbl x={1054} y={406} t="2-2" />
    <Hex x={601} y={551} /><Lbl x={602} y={551} t="2-D" />
    <Hex x={601} y={669} /><Lbl x={602} y={669} t="2-C" />
    <Hex x={601} y={906} /><Lbl x={602} y={906} t="2-B" />
    <Hex x={1982} y={669} /><Lbl x={1982} y={669} t="2-C" />
    <Hex x={1982} y={906} /><Lbl x={1982} y={906} t="2-B" />
    <Lbl x={703} y={488} t="8100" />
    <Lbl x={936} y={488} t="8400" />
    <Lbl x={1169} y={488} t="8400" />
    <Lbl x={1884} y={488} t="8400" />
    <Lbl x={1185} y={445} t="12" />
    {/* ucs */}
    <path d="M656 946V918" stroke="#00ff00" strokeWidth="5" />
    <path d="M656 906l8 15h-16z" fill="#00ff00" />
    <path d="M662 947H685" stroke="#ff0000" strokeWidth="5" />
    <path d="M700 947l-17-8v16z" fill="#ff0000" />
    <circle cx="656" cy="947" r="8" fill="#0000b0" />
    <text x="656" y="900" textAnchor="middle" fontSize="21" fontFamily="Liberation Sans, sans-serif" fill="#00e000">Y</text>
    <text x="711" y="955" textAnchor="middle" fontSize="22" fontFamily="Liberation Sans, sans-serif" fill="#ff0000">X</text>
    {/* bottom axis strip, dimmed */}
    <Hex x={589} y={1004} /><Lbl x={589} y={1004} t="2-18" />
    <Hex x={817} y={1004} /><Lbl x={817} y={1004} t="2-1" />
    <Hex x={1054} y={1004} /><Lbl x={1054} y={1004} t="2-2" />
    <Hex x={1982} y={1008} /><Lbl x={1982} y={1008} t="2-" />
    <rect x="581" y="982" width="1421" height="40" fill="#383838" fillOpacity="0.75" />
  </svg>
);

const FloatBtn = ({ label, split }: { label: string; split?: boolean }) => (
  <div className="flex h-[38px] border border-[#173b63] bg-[#1f5084] text-[#dfe8f2]">
    <div className="flex-1 flex items-center justify-center">{label}</div>
    {split && (
      <div className="w-[24px] border-l border-[#173b63] flex items-center justify-center">
        <span className="w-0 h-0 border-x-[5px] border-x-transparent border-t-[5px] border-t-white" />
      </div>
    )}
  </div>
);

const FloatPanel = () => (
  <div className="absolute left-[1px] top-[1px] w-[218px] h-[173px] bg-[#1f5084] border border-[#2a5f95] flex flex-col">
    <div className="h-[18px] bg-[#173a5f] flex items-center justify-end pr-[6px]"><Close className="text-[#a9c6e6]" /></div>
    <div className="flex flex-col gap-[9px] pl-[11px] pr-[8px] pt-[11px]">
      <FloatBtn label="提取板筋线" />
      <FloatBtn label="提取板筋标注" />
      <FloatBtn label="点选识别受力筋" split />
    </div>
  </div>
);

const ViewTools = () => (
  <div className="absolute right-0 top-0 w-[50px] h-[368px] bg-white flex flex-col items-center pt-[19px] shadow-[0_0_3px_rgba(0,0,0,0.5)]">
    <svg width="34" height="32" viewBox="0 0 34 32" fill="none" stroke="#7c8494" strokeWidth="1.6"><circle cx="17" cy="16" r="13" /><path d="M4 22C8 27 27 16 31 5c1-3-4-2-6-1" stroke={BLUE} /><path d="M4 22c-3-1-2-5 0-8" stroke={BLUE} /></svg>
    <svg width="32" height="32" viewBox="0 0 32 32" fill="none" stroke="#7c8494" strokeWidth="1.6" className="mt-[11px]"><path d="M2 10l6-8h22v22l-6 7H2zM2 10h22v21M24 10l6-8" /><text x="4" y="27" fontSize="10" fontWeight="700" fill={BLUE} stroke="none">3D</text></svg>
    <svg width="32" height="32" viewBox="0 0 32 32" fill="none" stroke="#7c8494" strokeWidth="1.6" className="mt-[11px]"><path d="M2 10h22v21H2zM24 31l6-7V2" /><path d="M2 10l6-8h22l-6 8z" stroke={BLUE} /></svg>
    <span className="mt-[10px] w-0 h-0 border-x-[5px] border-x-transparent border-t-[6px] border-t-[#5a6272]" />
    <svg width="32" height="32" viewBox="0 0 32 32" fill="#d5e4f7" stroke={BLUE} strokeWidth="1.6" className="mt-[10px]"><path d="M2 10h22v21H2zM24 10l6-8v22l-6 7zM2 10l6-8h22l-6 8z" /></svg>
    <span className="mt-[11px] w-0 h-0 border-x-[5px] border-x-transparent border-t-[6px] border-t-[#5a6272]" />
    <svg width="32" height="32" viewBox="0 0 32 32" fill="none" stroke="#7c8494" strokeWidth="1.8" className="mt-[11px]"><path d="M2 10V2h9M21 2h9v8M30 22v8h-9M11 30H2v-8" /></svg>
    <svg width="32" height="32" viewBox="0 0 32 32" fill="none" className="mt-[12px]"><rect x="1.5" y="1.5" width="29" height="29" rx="3" stroke="#7c8494" strokeWidth="1.6" strokeDasharray="3 2" /><path d="M16 7l8 4.5v9L16 25l-8-4.5v-9zM8 11.5l8 4.5 8-4.5M16 16v9" stroke={BLUE} strokeWidth="1.6" /></svg>
    <div className="w-[34px] h-px bg-[#888] mt-[9px]" />
    <svg width="32" height="32" viewBox="0 0 32 32" fill="none" stroke="#7c8494" strokeWidth="1.6" className="mt-[9px]"><path d="M16 31H2V2h28v20M7 9h4M13 9h12M7 15h3M12 15h8M7 21h3" /><ellipse cx="25" cy="26" rx="6" ry="4" stroke={BLUE} /><circle cx="25" cy="26" r="1.5" fill={BLUE} stroke={BLUE} /></svg>
  </div>
);

const snapBtn = 'h-[37px] border-2 border-[#c8c8c8] rounded-[4px] flex items-center justify-center text-[#5a6272] bg-white';
const StatusBar = () => (
  <div className="flex items-center h-[46px] bg-white text-[#444] shrink-0 relative whitespace-pre">
    <span className="w-[92px] pl-[1px]">:  4.2</span>
    <span className="w-[210px]">标高： 7.15~11.35</span>
    <span className="w-[165px]">选中图元 : 0</span>
    <span className="w-[165px]">隐藏图元 : 0</span>
    <div className="flex items-center gap-[6px]">
      <div className={`${snapBtn} w-[37px]`}><Ic><G d="M5 3v17h16M5 15h6v5" /></Ic></div>
      <div className="w-[53px] h-[37px] border-2 border-[#5fa0ec] rounded-[4px] bg-[#d3e4fa] flex items-center justify-center gap-[8px] text-[#5a6272]">
        <Ic><rect x="3" y="3" width="18" height="18" rx="4" /><circle cx="4" cy="4" r="2" stroke={BLUE} fill="#fff" /></Ic>
        <Caret className="" />
      </div>
      <div className={`${snapBtn} w-[38px] ml-[3px]`}><Ic><G d="M3 3l18 18M21 3L3 21" /><circle cx="12" cy="12" r="2" stroke={BLUE} fill="#fff" /></Ic></div>
      <div className={`${snapBtn} w-[53px] ml-[3px] gap-[7px]`}><Ic><G d="M3 21h18M4 18L18 3" /><rect x="8" y="12" width="3" height="3" /></Ic><Caret className="" /></div>
      <div className={`${snapBtn} w-[53px] gap-[7px]`}><Ic><G d="M2 7h8M6 3v8" /><rect x="9" y="14" width="13" height="6" fill="#5a6272" /></Ic><Caret className="" /></div>
      <div className={`${snapBtn} w-[37px]`}><Ic><G d="M3 3h14v15H3zM17 6h3v12" /><rect x="5" y="5" width="10" height="11" fill="#5a6272" /><path d="M17 16l5 5h-5z" fill="#5a6272" /></Ic></div>
      <div className={`${snapBtn} w-[37px]`}><Ic><G d="M4 20l3-12 12-4" /><circle cx="4" cy="20" r="1.5" /><circle cx="20" cy="4" r="1.5" /><path d="M15 13l6 5h-5z" fill="#5a6272" /></Ic></div>
    </div>
  </div>
);

const TaskBar = () => (
  <div className="flex h-[7px] bg-[#1b2530] border-t border-[#51606e] shrink-0 relative z-30">
    <span className="ml-[65px] w-[23px] rounded-t-full bg-[#2f9be8]" />
    <span className="ml-[73px] w-[10px] rounded-t-full bg-[#3fa53f]" />
    <span className="ml-[73px] w-[12px] rounded-t-full bg-[#d84a3a]" />
    <span className="ml-[30px] w-[42px] rounded-t-full bg-[#1e8cf2]" />
    <span className="ml-[118px] w-[35px] rounded-t-full bg-[#7ed957]" />
    <span className="ml-[23px] w-[72px] bg-gradient-to-b from-[#cfcfcf] to-[#666]" />
    <span className="ml-[6px] w-[69px] bg-gradient-to-r from-[#e9b0b0] to-[#f5f5f5]" />
    <span className="ml-[8px] w-[75px] bg-gradient-to-r from-[#999] to-[#2a86d8]" />
    <span className="ml-[5px] w-[72px] bg-[#dfeefb]" />
    <span className="ml-[374px] w-[412px] bg-gradient-to-r from-[#a4c8ec] to-[#c0dcf5]" />
    <span className="ml-[2px] w-[118px] bg-[#3c6a96]" />
    <span className="w-[148px] bg-[#8fa8c0]" />
    <span className="ml-auto w-[14px] mr-[2px] bg-[#7d8a94]" />
  </div>
);

const Dialog = () => (
  <div className="absolute left-[1194px] top-[274px] w-[674px] h-[794px] bg-white border border-[#dcdcdc] z-20 flex flex-col shadow-[0_0_14px_rgba(0,0,0,0.7)]">
    <div className="h-[60px] shrink-0 pl-[17px] pr-[19px] pb-[3px] flex items-center justify-between text-[20.5px] text-[#444]">
      自动识别板筋
      <svg width="18" height="18" viewBox="0 0 18 18" stroke="#888" strokeWidth="1.4"><path d="M2 2l14 14M16 2L2 16" /></svg>
    </div>
    <div className="ml-[17px] w-[637px] h-[695px] shrink-0 border border-[#d5d5d5] text-[#444]">
      <div className="flex h-[32px] w-[598px] text-white font-medium">
        <div className="w-[35px] bg-[#efefef]" />
        <div className="w-[226px] flex items-center justify-center bg-[#7ab8f5] border border-[#6aaaea]">名称</div>
        <div className="w-[151px] flex items-center justify-center bg-[#7ab8f5] border-y border-r border-[#6aaaea]">钢筋信息</div>
        <div className="w-[152px] flex items-center justify-center bg-[#7ab8f5] border-y border-r border-[#6aaaea]">钢筋类别</div>
        <div className="w-[34px] bg-[#efefef]" />
      </div>
      <div className="flex h-[35px] w-[598px] bg-[#d4e8fd] border-b-[3px] border-[#7ab8f5]">
        <div className="w-[35px] flex items-center justify-center bg-[#7ab8f5] text-white font-bold">1</div>
        <div className="w-[226px] pl-[4px] flex items-center border-r border-[#c5d8ec] whitespace-nowrap">无标注SLJ-C8@200</div>
        <div className="w-[151px] pl-[4px] flex items-center border-r border-[#c5d8ec]">C8@200</div>
        <div className="w-[152px] pl-[4px] flex items-center border-r border-[#c5d8ec]">底筋</div>
        <div className="w-[34px] flex items-center justify-center border-r-2 border-[#7ab8f5]">
          <svg width="22" height="22" viewBox="0 0 22 22" fill="none" stroke={BLUE} strokeWidth="1.2"><circle cx="11" cy="11" r="7" /><circle cx="11" cy="11" r="3" /><path d="M11 1v4M11 17v4M1 11h4M17 11h4" /></svg>
        </div>
      </div>
    </div>
    <div className="flex justify-end gap-[10px] pr-[18px] mt-[10px] h-[29px] overflow-hidden shrink-0">
      <div className="w-[119px] h-[38px] rounded-[4px] bg-[#2e80e0] text-white flex items-center justify-center">确定</div>
      <div className="w-[118px] h-[38px] rounded-[4px] border border-[#d8d8d8] text-[#444] flex items-center justify-center">取消</div>
    </div>
  </div>
);

export default function App() {
  return (
    <div className="relative w-[2002px] h-[1075px] flex flex-col overflow-hidden bg-[#f4f4f4] text-[18.5px] leading-none [font-family:'Noto_Sans_CJK_SC','Noto_Sans',sans-serif]">
      <TopBar />
      <Ribbon />
      <SelectBar />
      <div className="flex h-[801px] shrink-0">
        <LeftPanel />
        <div className="w-[6px] shrink-0 bg-[#f6f6f6]" />
        <div className="w-[420px] shrink-0 flex flex-col gap-[7px]">
          <DrawingPanel />
          <LayerPanel />
        </div>
        <div className="w-[6px] shrink-0 flex flex-col bg-white">
          <div className="h-[328px]" />
          <div className="h-[150px] bg-[#555]" />
        </div>
        <div className="relative flex-1 overflow-hidden">
          <Drawing />
          <FloatPanel />
          <ViewTools />
        </div>
      </div>
      <StatusBar />
      <TaskBar />
      <Bubble />
      <Dialog />
    </div>
  );
}
